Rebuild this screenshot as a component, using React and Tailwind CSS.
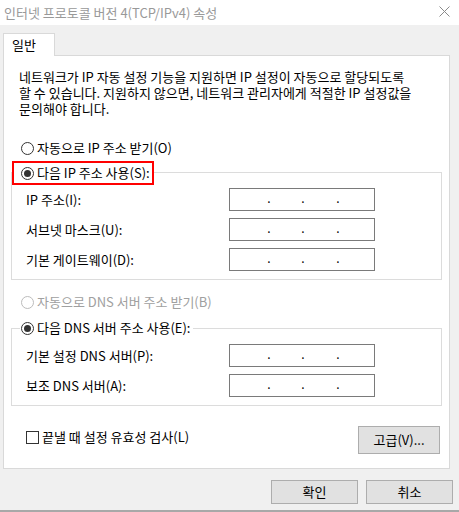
import React from 'react';

const font = { fontFamily: '"Noto Sans CJK KR", "Malgun Gothic", sans-serif' };

// radio circle
const Radio = ({ checked, disabled }) => (
  <span
    className={`flex h-[13px] w-[13px] shrink-0 items-center justify-center rounded-full border bg-white ${
      disabled ? 'border-[#bcbcbc]' : 'border-[#333333]'
    }`}
  >
    {checked && <span className="h-[7px] w-[7px] rounded-full bg-[#333333]" />}
  </span>
);

// ip address box with three dots
const IpBox = () => (
  <div className="flex h-[23px] w-[146px] items-start border border-[#7a7a7a] bg-white pl-[37px]">
    <span className="mt-[3px] w-[4px] text-center text-[12px] leading-[12px]">.</span>
    <span className="ml-[30px] mt-[3px] w-[4px] text-center text-[12px] leading-[12px]">.</span>
    <span className="ml-[31px] mt-[3px] w-[4px] text-center text-[12px] leading-[12px]">.</span>
  </div>
);

const FieldRow = ({ label }) => (
  <div className="flex items-center">
    <span className="w-[217px] pl-[14px] text-[13px] leading-[16px] text-black">{label}</span>
    <IpBox />
  </div>
);

const Button = ({ children, className = '' }) => (
  <button
    className={`flex items-center justify-center border border-[#adadad] bg-[#e1e1e1] text-[13px] leading-[16px] text-black ${className}`}
  >
    {children}
  </button>
);

export default function App() {
  return (
    <div className="flex h-[512px] w-[459px] flex-col overflow-hidden bg-[#f0f0f0]" style={font}>
      {/* Title bar */}
      <div className="flex h-[25px] shrink-0 items-center justify-between bg-white pl-[4px] pr-[9px]">
        <span className="text-[13px] leading-[16px] text-[#999999]">인터넷 프로토콜 버전 4(TCP/IPv4) 속성</span>
        <svg width="11" height="11" viewBox="0 0 11 11" className="mt-[-2px]">
          <path d="M0.5 0.5 L10.5 10.5 M10.5 0.5 L0.5 10.5" stroke="#8a8a8a" strokeWidth="1" fill="none" />
        </svg>
      </div>

      {/* Body */}
      <div className="flex flex-col pl-[3px] pt-[8px]">
        {/* Tab */}
        <div className="relative z-10 -mb-px flex h-[23px] w-[52px] items-center border border-b-0 border-[#d9d9d9] bg-white pl-[8px]">
          <span className="text-[13px] leading-[16px] text-black">일반</span>
        </div>

        {/* Panel */}
        <div className="flex h-[414px] w-[447px] flex-col border border-[#d9d9d9] bg-white px-[7px]">
          <p className="pl-[8px] pt-[13px] text-[13px] leading-[16px] text-black">
            네트워크가 IP 자동 설정 기능을 지원하면 IP 설정이 자동으로 할당되도록
            <br />할 수 있습니다. 지원하지 않으면, 네트워크 관리자에게 적절한 IP 설정값을
            <br />문의해야 합니다.
          </p>

          <div className="mt-[23px] flex h-[16px] items-center gap-[3px] pl-[10px]">
            <Radio />
            <span className="text-[13px] leading-[16px] text-black">자동으로 IP 주소 받기(O)</span>
          </div>

          {/* IP group */}
          <div className="mt-[16px] flex flex-col border border-[#dcdcdc] pb-[8px]">
            <div className="-mt-[12px] flex h-[24px] w-[142px] items-center gap-[3px] border-2 border-[#ff0000] bg-white pl-[7px]">
              <Radio checked />
              <span className="whitespace-nowrap text-[13px] leading-[16px] text-black">다음 IP 주소 사용(S):</span>
            </div>
            <div className="mt-[3px] flex flex-col gap-[7px]">
              <FieldRow label="IP 주소(I):" />
              <FieldRow label="서브넷 마스크(U):" />
              <FieldRow label="기본 게이트웨이(D):" />
            </div>
          </div>

          <div className="mt-[14px] flex h-[16px] items-center gap-[3px] pl-[10px]">
            <Radio disabled />
            <span className="text-[13px] leading-[16px] text-[#a0a0a0]">자동으로 DNS 서버 주소 받기(B)</span>
          </div>

          {/* DNS group */}
          <div className="mt-[18px] flex flex-col border border-[#dcdcdc] pb-[8px]">
            <div className="-mt-[9px] ml-[8px] flex h-[16px] items-center gap-[3px] self-start bg-white pl-px pr-[3px]">
              <Radio checked />
              <span className="text-[13px] leading-[16px] text-black">다음 DNS 서버 주소 사용(E):</span>
            </div>
            <div className="mt-[8px] flex flex-col gap-[7px]">
              <FieldRow label="기본 설정 DNS 서버(P):" />
              <FieldRow label="보조 DNS 서버(A):" />
            </div>
          </div>

          <div className="mt-[20px] flex items-start justify-between pl-[15px] pr-[2px]">
            <div className="mt-[3px] flex items-center gap-[3px]">
              <span className="h-[13px] w-[13px] border border-[#333333] bg-white" />
              <span className="text-[13px] leading-[16px] text-black">끝낼 때 설정 유효성 검사(L)</span>
            </div>
            <Button className="h-[28px] w-[82px]">고급(V)...</Button>
          </div>
        </div>

        {/* OK / Cancel */}
        <div className="mt-[11px] flex justify-end gap-[8px] pr-[6px]">
          <Button className="h-[24px] w-[87px]">확인</Button>
          <Button className="h-[24px] w-[87px]">취소</Button>
        </div>
      </div>
      <div className="mt-auto h-[2px] w-full bg-[#a8a8a8]" />
    </div>
  );
}
